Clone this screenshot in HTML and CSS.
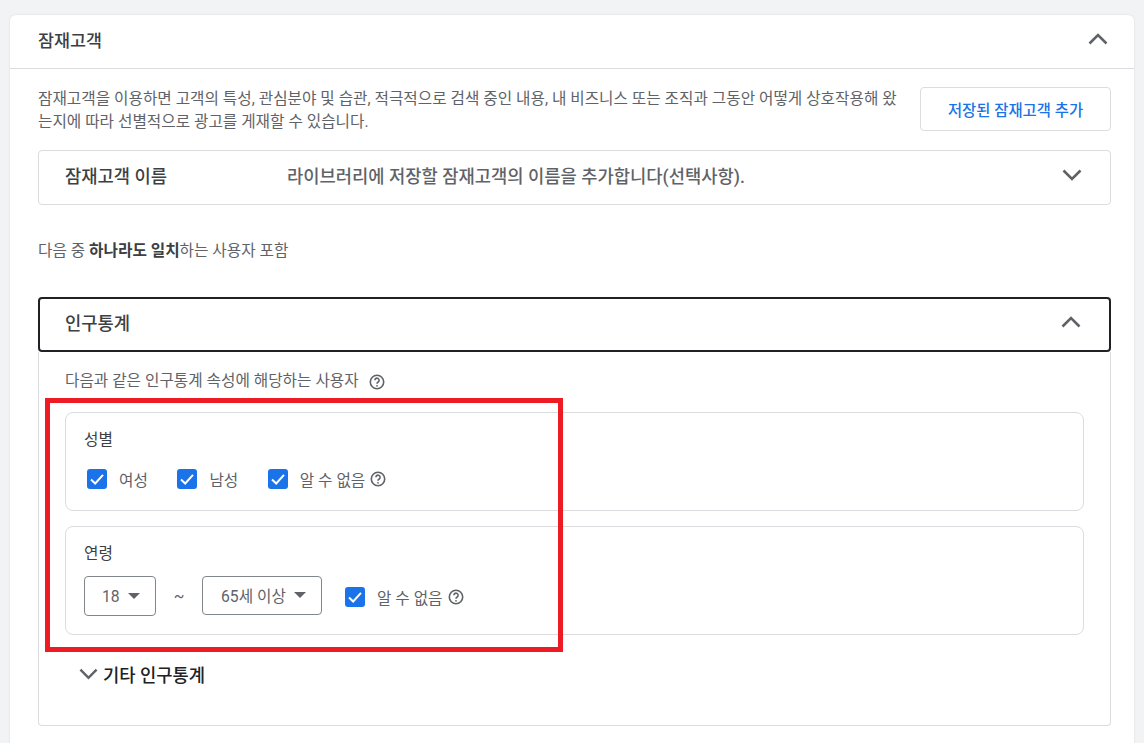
FILE: index.html
```html
<!DOCTYPE html>
<html lang="ko">
<head>
  <meta charset="UTF-8" />
  <meta name="viewport" content="width=device-width, initial-scale=1.0" />
  <title>잠재고객</title>
  <link rel="stylesheet" href="styles.css">
</head>
<body>
  <div class="card">
    <div class="card-header">
      <h2>잠재고객</h2>
      <svg class="chevron" viewBox="0 0 20 12"><path d="M1.5 10.5 10 2l8.500 8.500"/></svg>
    </div>

    <div class="card-body">
      <div class="intro">
        <p>잠재고객을 이용하면 고객의 특성, 관심분야 및 습관, 적극적으로 검색 중인 내용, 내 비즈니스 또는 조직과 그동안 어떻게 상호작용해 왔는지에 따라 선별적으로 광고를 게재할 수 있습니다.</p>
        <button class="btn-add">저장된 잠재고객 추가</button>
      </div>

      <div class="name-row">
        <span class="name-title">잠재고객 이름</span>
        <span class="name-desc">라이브러리에 저장할 잠재고객의 이름을 추가합니다(선택사항).</span>
        <svg class="chevron" viewBox="0 0 20 12"><path d="M1.500 1.500 10 10l8.500-8.500"/></svg>
      </div>

      <p class="match">다음 중 <b>하나라도 일치</b>하는 사용자 포함</p>

      <div class="demo-header">
        <span>인구통계</span>
        <svg class="chevron" viewBox="0 0 20 12"><path d="M1.5 10.500 10 2l8.500 8.500"/></svg>
      </div>

      <div class="demo-panel">
        <div class="demo-note">다음과 같은 인구통계 속성에 해당하는 사용자
          <svg class="help help-note" viewBox="0 0 16 16"><circle cx="8" cy="8" r="6.700"/><path d="M5.900 6.300a2.100 2.100 0 1 1 3.300 1.700c-.8.500-1.200.9-1.200 1.800"/><circle class="dot" cx="8" cy="11.800" r=".9"/></svg>
        </div>

        <div class="group group-gender">
          <div class="group-label">성별</div>
          <div class="checks">
            <label class="check"><span class="box"><svg viewBox="0 0 20 20"><path d="M4 10.500 8.200 14.500 16 5.800"/></svg></span>여성</label>
            <label class="check"><span class="box"><svg viewBox="0 0 20 20"><path d="M4 10.500 8.200 14.500 16 5.800"/></svg></span>남성</label>
            <label class="check"><span class="box"><svg viewBox="0 0 20 20"><path d="M4 10.500 8.200 14.500 16 5.800"/></svg></span>알 수 없음
              <svg class="help" viewBox="0 0 16 16"><circle cx="8" cy="8" r="6.700"/><path d="M5.900 6.300a2.100 2.100 0 1 1 3.300 1.700c-.8.500-1.200.9-1.200 1.800"/><circle class="dot" cx="8" cy="11.800" r=".9"/></svg>
            </label>
          </div>
        </div>

        <div class="group group-age">
          <div class="group-label">연령</div>
          <div class="age-row">
            <div class="select select-from">18<span class="caret"></span></div>
            <span class="tilde">~</span>
            <div class="select select-to">65세 이상<span class="caret"></span></div>
            <label class="check"><span class="box"><svg viewBox="0 0 20 20"><path d="M4 10.500 8.200 14.500 16 5.800"/></svg></span>알 수 없음
              <svg class="help" viewBox="0 0 16 16"><circle cx="8" cy="8" r="6.700"/><path d="M5.900 6.300a2.100 2.100 0 1 1 3.300 1.700c-.8.500-1.200.9-1.200 1.800"/><circle class="dot" cx="8" cy="11.800" r=".9"/></svg>
            </label>
          </div>
        </div>

        <div class="more">
          <svg class="chevron" viewBox="0 0 20 12"><path d="M1.500 1.500 10 10l8.500-8.500"/></svg>
          <span>기타 인구통계</span>
        </div>
      </div>
    </div>
  </div>

  <div class="highlight"></div>
</body>
</html>
```

FILE: styles.css
```css
html, body {
  height: 100%;
}

body {
  margin: 0;
  padding: 15px 10px 0;
  box-sizing: border-box;
  background: #f1f3f4;
  color: #5f6368;
  font-family: Roboto, "Noto Sans CJK KR", sans-serif;
  font-size: 15.7px;
  overflow: hidden;
  position: relative;
}

.card {
  background: white;
  border-radius: 6px 6px 0 0;
  box-shadow: 0 0 2px rgba(60,64,67,0.15);
  height: 760px;
}

.card-header {
  display: flex;
  align-items: center;
  justify-content: space-between;
  height: 54px;
  box-sizing: border-box;
  padding: 0 26px 5px 28px;
  border-bottom: 1px solid #dadce0;
}

.card-header h2 {
  margin: 0;
  font-size: 17.4px;
  font-weight: 500;
  color: #3c4043;
}

.chevron {
  width: 20px;
  height: 12px;
  fill: none;
  stroke: #5f6368;
  stroke-width: 2.600;
}

.card-body {
  padding: 18px 23px 0 28px;
}

.intro {
  display: flex;
  justify-content: space-between;
  align-items: flex-start;
}

.intro p {
  margin: 0;
  width: 862px;
  line-height: 23px;
  word-break: break-all;
}

.btn-add {
  width: 191px;
  height: 44px;
  background: white;
  border: 1px solid #dadce0;
  border-radius: 4px;
  color: #1a73e8;
  font-family: inherit;
  font-size: 15.4px;
  font-weight: 500;
}

.name-row {
  display: flex;
  align-items: center;
  height: 55px;
  box-sizing: border-box;
  margin-top: 17px;
  padding: 0 28px 5px 26px;
  border: 1px solid #dadce0;
  border-radius: 4px;
}

.name-title {
  width: 222px;
  font-size: 17.7px;
  font-weight: 500;
  color: #3c4043;
}

.name-desc {
  flex: 1;
  font-size: 17.7px;
  font-weight: 500;
  color: #5f6368;
}

.match {
  margin: 36px 0 0;
  height: 20px;
  line-height: 20px;
}

.match b {
  font-weight: 700;
  color: #3c4043;
}

.demo-header {
  display: flex;
  align-items: center;
  justify-content: space-between;
  height: 55px;
  box-sizing: border-box;
  margin-top: 36px;
  padding: 0 28px 5px 25px;
  border: 2px solid #202124;
  border-radius: 4px;
  font-size: 17.7px;
  font-weight: 500;
  color: #3c4043;
}

.demo-panel {
  height: 374px;
  box-sizing: border-box;
  padding: 19px 26px 0;
  border: 1px solid #dadce0;
  border-top: none;
  border-radius: 0 0 4px 4px;
}

.demo-note {
  display: flex;
  align-items: center;
  gap: 10px;
  height: 20px;
  line-height: 20px;
}

.help {
  width: 16px;
  height: 16px;
  fill: none;
  stroke: #5f6368;
  stroke-width: 1.600;
  flex: none;
}

.help .dot {
  fill: #5f6368;
  stroke: none;
}

.help-note {
  margin-top: 2px;
}

.group {
  box-sizing: border-box;
  border: 1px solid #dadce0;
  border-radius: 8px;
  padding: 0 18px;
}

.group-gender {
  height: 99px;
  margin-top: 21px;
  padding-top: 17px;
}

.group-age {
  height: 109px;
  margin-top: 15px;
  padding-top: 17px;
}

.group-label {
  height: 20px;
  line-height: 20px;
  color: #3c4043;
}

.checks {
  display: flex;
  gap: 29.500px;
  margin-top: 19px;
  margin-left: 3px;
}

.check {
  display: flex;
  align-items: center;
  gap: 12px;
  height: 20px;
}

.check .help {
  margin-left: -7px;
}

.box {
  width: 20px;
  height: 20px;
  border-radius: 3px;
  background: #1a73e8;
  flex: none;
}

.box svg {
  display: block;
  fill: none;
  stroke: white;
  stroke-width: 2;
}

.age-row {
  display: flex;
  align-items: center;
  margin-top: 10px;
}

.select {
  display: flex;
  align-items: center;
  box-sizing: border-box;
  border: 1px solid #80868b;
  border-radius: 4px;
}

.select-from {
  width: 72px;
  height: 40px;
  margin-top: 2px;
  padding-left: 17px;
}

.select-to {
  width: 120px;
  height: 39px;
  padding-left: 18px;
}

.caret {
  margin-left: 8px;
  border-left: 6px solid transparent;
  border-right: 6px solid transparent;
  border-top: 6px solid #5f6368;
}

.tilde {
  width: 46px;
  text-align: center;
  margin-top: 2px;
}

.age-row .check {
  margin-left: 23px;
  margin-top: 4px;
}

.more {
  display: flex;
  align-items: center;
  gap: 5px;
  margin-top: 26px;
  margin-left: 14px;
  font-size: 17.7px;
  font-weight: 500;
  color: #202124;
}

.more .chevron {
  width: 19px;
}

/* red annotation box drawn over the screenshot */
.highlight {
  position: absolute;
  left: 45px;
  top: 398px;
  width: 518px;
  height: 254px;
  box-sizing: border-box;
  border: 5px solid #ed1c24;
}
```
